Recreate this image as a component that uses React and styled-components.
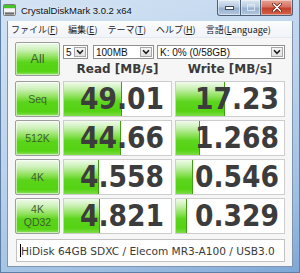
import React from 'react';
import styled, { createGlobalStyle } from 'styled-components';

const GlobalStyle = createGlobalStyle`
  html, body { margin: 0; padding: 0; }
  body {
    width: 300px;
    height: 273px;
    overflow: hidden;
    background: #fff;
    font-family: "Liberation Sans", Arial, sans-serif;
  }
`;

const Window = styled.div`
  width: 300px;
  height: 273px;
  box-sizing: border-box;
  display: flex;
  flex-direction: column;
  background: linear-gradient(160deg, #d3e3f4 0%, #bcd3ec 45%, #9fbfe2 80%, #7ea7d6 100%);
  box-shadow: inset 1px 0 0 #5d7fa6, inset -1px 0 0 #5d7fa6, inset 0 -1px 0 #5d7fa6;
`;

const TitleBar = styled.div`
  height: 21px;
  flex: 0 0 21px;
  display: flex;
  align-items: flex-start;
  padding-left: 3px;
`;

const AppIcon = styled.svg`
  margin-top: 4px;
  flex: 0 0 auto;
`;

const Title = styled.div`
  margin-left: 5px;
  margin-top: 5px;
  font-family: "Liberation Sans", Arial, sans-serif;
  font-size: 9.5px;
  line-height: 11px;
  color: #111;
  text-shadow: 0 0 6px rgba(255, 255, 255, 0.9);
`;

const Captions = styled.div`
  margin-left: auto;
  margin-right: 7px;
  display: flex;
  height: 16px;
`;

const CaptionButton = styled.div`
  width: ${p => p.$w}px;
  height: 15px;
  display: flex;
  align-items: center;
  justify-content: center;
  border: 1px solid #4e5f78;
  border-top: none;
  border-left: ${p => (p.$first ? '1px solid #4e5f78' : 'none')};
  border-radius: ${p => p.$radius};
  background: ${p =>
    p.$close
      ? 'linear-gradient(180deg, #e8a493 0%, #d7725f 45%, #c4412b 55%, #d2634b 100%)'
      : 'linear-gradient(180deg, #dbe6f2 0%, #b8cbe0 45%, #98b1cf 55%, #b3c8e0 100%)'};
  box-shadow: inset 0 0 0 1px rgba(255, 255, 255, 0.45);
`;

const Client = styled.div`
  flex: 1;
  margin: 0 7px 6px 7px;
  border: 1px solid #7f94ae;
  border-top: none;
  background: #f6f6f6;
  display: flex;
  flex-direction: column;
`;

const MenuBar = styled.div`
  height: 16px;
  display: flex;
  align-items: center;
  gap: 10px;
  padding-left: 3px;
  background: linear-gradient(180deg, #fbfcfe 0%, #f0f3f8 100%);
  border-bottom: 1px solid #e6eaf0;
  font-family: "Noto Sans CJK JP", "Noto Sans", sans-serif;
  font-size: 9px;
  color: #1a1a1a;
  & u { text-decoration-thickness: 1px; text-underline-offset: 1px; }
`;

const MenuItem = styled.span`
  white-space: nowrap;
`;

const Content = styled.div`
  padding: 4px 0 0 7px;
  display: flex;
  flex-direction: column;
`;

const TopSection = styled.div`
  display: flex;
  gap: 3px;
  height: 34px;
  margin-bottom: 5px;
`;

const TestButton = styled.div`
  width: 45px;
  height: ${p => p.$h}px;
  box-sizing: border-box;
  border: 1px solid #9c9c9c;
  border-radius: 2px;
  display: flex;
  flex-direction: column;
  align-items: center;
  justify-content: center;
  background: linear-gradient(180deg, #f1faec 0%, #cbf0b6 22%, #8ce156 45%, #5ad41a 60%, #55d312 88%, #8fe264 100%);
  box-shadow: inset 0 0 0 1px rgba(255, 255, 255, 0.55);
  color: #3d5f30;
  font-family: "Liberation Sans", Arial, sans-serif;
  font-size: ${p => p.$fs}px;
  line-height: 13px;
  text-align: center;
`;

const Controls = styled.div`
  display: flex;
  flex-direction: column;
  width: 222px;
`;

const SelectRow = styled.div`
  display: flex;
  margin-top: 3px;
  height: 14px;
`;

const Select = styled.div`
  width: ${p => p.$w}px;
  margin-right: ${p => p.$gap}px;
  height: 14px;
  box-sizing: border-box;
  border: 1px solid #8e8f8f;
  background: #fff;
  display: flex;
  align-items: center;
  font-family: "Liberation Sans", Arial, sans-serif;
  font-size: 10px;
  color: #111;
  padding-left: 2px;
`;

const SelectText = styled.span`
  flex: 1;
  white-space: nowrap;
  overflow: hidden;
`;

const ArrowBox = styled.div`
  width: 12px;
  height: 10px;
  margin-right: 1px;
  box-sizing: border-box;
  border: 1px solid #a7a7a7;
  background: linear-gradient(180deg, #f6f6f6 0%, #e2e2e2 100%);
  display: flex;
  align-items: center;
  justify-content: center;
`;

const HeaderRow = styled.div`
  margin-top: auto;
  display: grid;
  grid-template-columns: 109px 110px;
  column-gap: 3px;
`;

const HeaderLabel = styled.div`
  text-align: center;
  font-family: "DejaVu Sans", sans-serif;
  font-weight: bold;
  font-size: 12px;
  line-height: 14px;
  color: #3a3a3a;
`;

const Results = styled.div`
  display: grid;
  grid-template-columns: 45px 109px 110px;
  grid-auto-rows: 36px;
  gap: 3px;
`;

const barFill = w => `
  linear-gradient(#3f9e14, #3f9e14) no-repeat ${Math.max(w - 1, 0)}px 0 / 1px 100%,
  linear-gradient(180deg, #f1fbec 0%, #c8f0b2 20%, #8de25a 42%, #5dd51e 58%, #54d212 85%, #7ddd46 100%) no-repeat 0 0 / ${w}px 100%,
  #ffffff
`;

const ResultCell = styled.div`
  box-sizing: border-box;
  border: 1px solid #cdcdcd;
  background: ${p => barFill(p.$bar)};
  text-align: right;
  padding-right: ${p => p.$pr}px;
  font-family: "DejaVu Sans Condensed", "DejaVu Sans", sans-serif;
  font-weight: bold;
  font-size: 29.5px;
  line-height: 34px;
  color: #3c3c3c;
`;

const Comment = styled.div`
  margin: 5px 0 0 1px;
  width: 269px;
  height: 23px;
  box-sizing: border-box;
  border: 1px solid #c2c2c2;
  background: #fff;
  display: flex;
  align-items: center;
  padding-left: 3px;
  font-family: "DejaVu Sans", sans-serif;
  font-size: 10.6px;
  color: #3a3a3a;
  white-space: nowrap;
`;

const Caret = styled.span`
  display: inline-block;
  width: 1px;
  height: 13px;
  background: #000;
`;

const Chevron = () => (
  <svg width="8" height="6" viewBox="0 0 8 6">
    <path d="M1 1.2 L4 4.4 L7 1.2" fill="none" stroke="#1e1e1e" strokeWidth="1.6" />
  </svg>
);

const rows = [
  { label: ['Seq'], read: '49.01', write: '17.23', rb: 58, wb: 49 },
  { label: ['512K'], read: '44.66', write: '1.268', rb: 57, wb: 24 },
  { label: ['4K'], read: '4.558', write: '0.546', rb: 35, wb: 17 },
  { label: ['4K', 'QD32'], read: '4.821', write: '0.329', rb: 36, wb: 11 },
];

const menu = [
  ['ファイル(', 'F', ')'],
  ['編集(', 'E', ')'],
  ['テーマ(', 'T', ')'],
  ['ヘルプ(', 'H', ')'],
  ['言語(', 'L', 'anguage)'],
];

export default function App() {
  return (
    <>
      <GlobalStyle />
      <Window>
        <TitleBar>
          <AppIcon width="13" height="12" viewBox="0 0 13 12">
            <rect x="0.5" y="0.5" width="12" height="11" rx="1" fill="#d9d9d9" stroke="#7b7b7b" />
            <rect x="1" y="1" width="11" height="3" fill="#45c42a" />
            <rect x="1" y="5" width="11" height="3" fill="#f4f4f4" />
            <rect x="2" y="8.5" width="9" height="2" fill="#6a6a6a" />
          </AppIcon>
          <Title>CrystalDiskMark 3.0.2 x64</Title>
          <Captions>
            <CaptionButton $w={22} $first $radius="0 0 0 3px">
              <svg width="9" height="4" viewBox="0 0 9 4">
                <rect x="0.5" y="0.5" width="8" height="3" fill="#fff" stroke="#3b4a60" strokeWidth="1" />
              </svg>
            </CaptionButton>
            <CaptionButton $w={19} $radius="0">
              <svg width="8" height="7" viewBox="0 0 8 7">
                <rect x="0.5" y="0.5" width="7" height="6" fill="none" stroke="#e4ecf5" strokeWidth="1" opacity="0.8" />
                <rect x="1.5" y="1.5" width="5" height="1" fill="#e4ecf5" opacity="0.8" />
              </svg>
            </CaptionButton>
            <CaptionButton $w={31} $close $radius="0 0 3px 0">
              <svg width="10" height="9" viewBox="0 0 10 9">
                <path d="M1.5 1 L8.5 8 M8.5 1 L1.5 8" stroke="#5a1a10" strokeWidth="3" strokeLinecap="round" />
                <path d="M1.5 1 L8.5 8 M8.5 1 L1.5 8" stroke="#ffffff" strokeWidth="1.6" strokeLinecap="round" />
              </svg>
            </CaptionButton>
          </Captions>
        </TitleBar>
        <Client>
          <MenuBar>
            {menu.map(([a, key, b]) => (
              <MenuItem key={a}>
                {a}
                <u>{key}</u>
                {b}
              </MenuItem>
            ))}
          </MenuBar>
          <Content>
            <TopSection>
              <TestButton $h={34} $fs={12.5}>All</TestButton>
              <Controls>
                <SelectRow>
                  <Select $w={25} $gap={5}>
                    <SelectText>5</SelectText>
                    <ArrowBox><Chevron /></ArrowBox>
                  </Select>
                  <Select $w={61} $gap={3}>
                    <SelectText>100MB</SelectText>
                    <ArrowBox><Chevron /></ArrowBox>
                  </Select>
                  <Select $w={128} $gap={0}>
                    <SelectText>K: 0% (0/58GB)</SelectText>
                    <ArrowBox><Chevron /></ArrowBox>
                  </Select>
                </SelectRow>
                <HeaderRow>
                  <HeaderLabel>Read [MB/s]</HeaderLabel>
                  <HeaderLabel>Write [MB/s]</HeaderLabel>
                </HeaderRow>
              </Controls>
            </TopSection>
            <Results>
              {rows.map(r => (
                <React.Fragment key={r.label.join('')}>
                  <TestButton $h={36} $fs={10.5}>
                    {r.label.map(l => (
                      <span key={l}>{l}</span>
                    ))}
                  </TestButton>
                  <ResultCell $bar={r.rb} $pr={7}>{r.read}</ResultCell>
                  <ResultCell $bar={r.wb} $pr={5}>{r.write}</ResultCell>
                </React.Fragment>
              ))}
            </Results>
            <Comment>
              <Caret />
              HiDisk 64GB SDXC / Elecom MR3-A100 / USB3.0
            </Comment>
          </Content>
        </Client>
      </Window>
    </>
  );
}
